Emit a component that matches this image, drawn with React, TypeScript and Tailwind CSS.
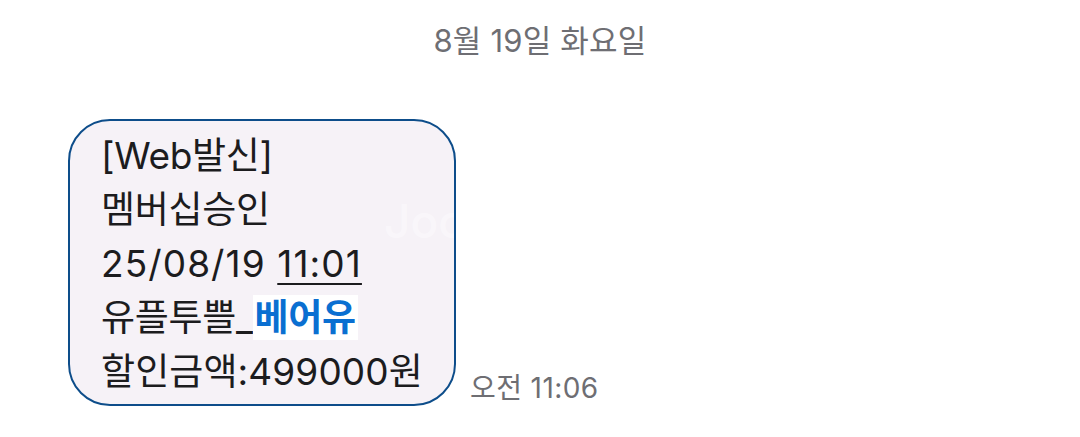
export default function App() {
  return (
    <div
      className="w-[1080px] h-[437px] bg-white relative overflow-hidden"
      style={{ fontFamily: 'Inter, "Noto Sans CJK KR", sans-serif' }}
    >
      {/* Date header */}
      <div className="pt-[21px] text-center text-[31px] leading-[40px] text-[#6e6e73] tracking-[0.2px]">
        8월 19일 화요일
      </div>

      {/* Message row */}
      <div className="flex items-end mt-[58px] pl-[68px]">
        <div className="relative w-[388px] h-[287px] rounded-[42px] border-[2.5px] border-[#0d4d8a] bg-[#f6f2f7] overflow-hidden pl-[31px] pt-[8px]">
          <div className="absolute left-[314px] top-[66px] text-[46px] font-medium text-white/40 select-none">
            Joo
          </div>
          <div className="relative text-[37px] leading-[54px] text-[#1c1c1e] tracking-[-0.3px]">
            <div>[Web발신]</div>
            <div>멤버십승인</div>
            <div className="tracking-[1.1px]">
              25/08/19 <span className="underline underline-offset-[6px] decoration-[2px]">11:01</span>
            </div>
            <div>
              유플투쁠_<span className="bg-white text-[#0a6fd1] font-bold px-[2px]">베어유</span>
            </div>
            <div className="tracking-[0.1px]">할인금액:499000원</div>
          </div>
        </div>
        <div className="ml-[14px] mb-[3px] text-[28px] leading-[30px] text-[#6e6e73] tracking-[0.4px]">오전 11:06</div>
      </div>
    </div>
  );
}
